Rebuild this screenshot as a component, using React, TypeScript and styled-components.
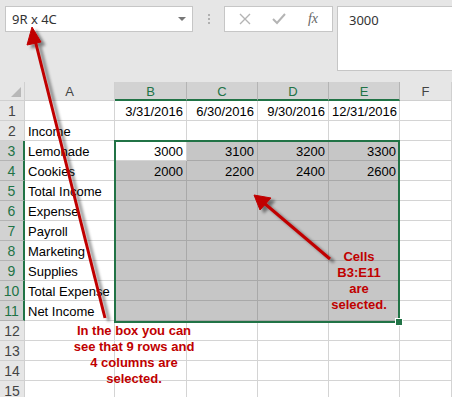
import React from "react";
import styled, { createGlobalStyle } from "styled-components";

const GREEN = "#217346";
const RED = "#c00000";
const COLS = "25px 90px 72px 71px 71px 71px 1fr";
const ROWS = "19px repeat(15, 20px)";

const GlobalStyle = createGlobalStyle`
  html, body {
    margin: 0;
    padding: 0;
    background: #ffffff;
    font-family: "Liberation Sans", Arial, sans-serif;
  }
`;

const colLetters = ["A", "B", "C", "D", "E", "F"];

const rows: string[][] = [
  ["", "3/31/2016", "6/30/2016", "9/30/2016", "12/31/2016", ""],
  ["Income", "", "", "", "", ""],
  ["Lemonade", "3000", "3100", "3200", "3300", ""],
  ["Cookies", "2000", "2200", "2400", "2600", ""],
  ["Total Income", "", "", "", "", ""],
  ["Expense", "", "", "", "", ""],
  ["Payroll", "", "", "", "", ""],
  ["Marketing", "", "", "", "", ""],
  ["Supplies", "", "", "", "", ""],
  ["Total Expense", "", "", "", "", ""],
  ["Net Income", "", "", "", "", ""],
  ["", "", "", "", "", ""],
  ["", "", "", "", "", ""],
  ["", "", "", "", "", ""],
  ["", "", "", "", "", ""],
];

// selection B3:E11 -> rows 3..11, cols 1..4
const inRange = (r: number, c: number) => r >= 3 && r <= 11 && c >= 1 && c <= 4;

const App = () => {
  return (
    <>
      <GlobalStyle />
      <Page>
        <Toolbar>
          <NameBox>
            <span>9R x 4C</span>
            <DropArrow />
          </NameBox>
          <Grip>
            <i />
            <i />
            <i />
          </Grip>
          <FxBox>
            <svg width="12" height="12" viewBox="0 0 12 12">
              <path d="M1 1 L11 11 M11 1 L1 11" stroke="#b4b4b4" strokeWidth="1.4" />
            </svg>
            <svg width="14" height="12" viewBox="0 0 14 12">
              <path d="M1 6 L5 10 L13 1" stroke="#b4b4b4" strokeWidth="2" fill="none" />
            </svg>
            <FxLabel>fx</FxLabel>
          </FxBox>
          <FormulaBox>3000</FormulaBox>
        </Toolbar>

        <SheetStack>
          <Sheet>
            <Corner>
              <CornerTriangle />
            </Corner>
            {colLetters.map((l, i) => (
              <ColHead key={l} $selected={i >= 1 && i <= 4}>
                {l}
              </ColHead>
            ))}
            {rows.map((row, ri) => {
              const r = ri + 1;
              return (
                <React.Fragment key={r}>
                  <RowHead $selected={r >= 3 && r <= 11}>{r}</RowHead>
                  {row.map((val, c) => {
                    const sel = inRange(r, c) ? (r === 3 && c === 1 ? "active" : "range") : "none";
                    return (
                      <Cell key={c} $sel={sel} $right={c > 0}>
                        {val}
                      </Cell>
                    );
                  })}
                </React.Fragment>
              );
            })}
          </Sheet>
          <SelectionLayer>
            <SelectionFrame>
              <FillHandle />
            </SelectionFrame>
          </SelectionLayer>
        </SheetStack>

        <Arrows width="452" height="397" viewBox="0 0 452 397">
          <defs>
            <filter id="shadow" x="-20%" y="-20%" width="140%" height="140%">
              <feDropShadow dx="4" dy="3" stdDeviation="1.6" floodColor="#000" floodOpacity="0.45" />
            </filter>
          </defs>
          <g filter="url(#shadow)" fill={RED} stroke={RED}>
            <line x1="105" y1="318" x2="35" y2="40" strokeWidth="3" />
            <polygon points="32,27 27,45 41,42" strokeWidth="1" />
            <line x1="330" y1="259" x2="264" y2="203" strokeWidth="3" />
            <polygon points="254,195 260,210 271,198" strokeWidth="1" />
          </g>
        </Arrows>

        <Note $x={134} $y={323}>
          In the box you can
          <br />
          see that 9 rows and
          <br />4 columns are
          <br />
          selected.
        </Note>
        <Note $x={359} $y={249}>
          Cells
          <br />
          B3:E11
          <br />
          are
          <br />
          selected.
        </Note>
      </Page>
    </>
  );
};

export default App;

const Page = styled.div`
  position: relative;
  width: 452px;
  height: 397px;
  overflow: hidden;
  background: #e6e6e6;
`;

const Toolbar = styled.div`
  height: 82px;
  box-sizing: border-box;
  padding: 6px 0 0 5px;
  display: flex;
  align-items: flex-start;
`;

const NameBox = styled.div`
  width: 188px;
  height: 26px;
  box-sizing: border-box;
  background: #fff;
  border: 1px solid #c6c6c6;
  display: flex;
  align-items: center;
  justify-content: space-between;
  padding: 0 6px 0 6px;
  font-family: "Noto Sans", "Open Sans", sans-serif;
  font-size: 13px;
  color: #333;
`;

const DropArrow = styled.div`
  width: 0;
  height: 0;
  border-left: 4px solid transparent;
  border-right: 4px solid transparent;
  border-top: 4px solid #777;
`;

const Grip = styled.div`
  width: 31px;
  height: 26px;
  display: flex;
  flex-direction: column;
  align-items: center;
  justify-content: center;
  gap: 2px;
  i {
    display: block;
    width: 2px;
    height: 2px;
    background: #b0b0b0;
  }
`;

const FxBox = styled.div`
  width: 109px;
  height: 26px;
  box-sizing: border-box;
  background: #fff;
  border: 1px solid #c6c6c6;
  display: flex;
  align-items: center;
  justify-content: space-between;
  padding: 0 14px 0 14px;
`;

const FxLabel = styled.span`
  font-family: "Liberation Serif", "DejaVu Serif", serif;
  font-style: italic;
  font-size: 14px;
  color: #666;
`;

const FormulaBox = styled.div`
  flex: 1;
  margin-left: 4px;
  height: 65px;
  box-sizing: border-box;
  background: #fff;
  border: 1px solid #c6c6c6;
  border-right: none;
  padding: 4px 0 0 11px;
  font-family: "Noto Sans", "Open Sans", sans-serif;
  font-size: 13px;
  color: #333;
`;

// the sheet and the selection overlay share one grid cell
const SheetStack = styled.div`
  display: grid;
  > * {
    grid-area: 1 / 1;
  }
`;

const Sheet = styled.div`
  display: grid;
  grid-template-columns: ${COLS};
  grid-template-rows: ${ROWS};
  background: #fff;
  font-family: "Liberation Sans", Arial, sans-serif;
  font-size: 13px;
`;

const SelectionLayer = styled.div`
  display: grid;
  grid-template-columns: ${COLS};
  grid-template-rows: ${ROWS};
  pointer-events: none;
`;

const HeadBase = styled.div`
  box-sizing: border-box;
  background: #e6e6e6;
  color: #444;
  display: flex;
  align-items: center;
  justify-content: center;
  font-size: 13px;
`;

const Corner = styled(HeadBase)`
  position: relative;
  border-right: 1px solid #d0d0d0;
  border-bottom: 1px solid #d0d0d0;
`;

const CornerTriangle = styled.div`
  position: absolute;
  right: 3px;
  bottom: 3px;
  width: 0;
  height: 0;
  border-left: 10px solid transparent;
  border-bottom: 10px solid #b8b8b8;
`;

const ColHead = styled(HeadBase)<{ $selected: boolean }>`
  background: ${(p) => (p.$selected ? "#d2d2d2" : "#e6e6e6")};
  color: ${(p) => (p.$selected ? GREEN : "#444")};
  border-right: 1px solid ${(p) => (p.$selected ? "#b4b4b4" : "#d0d0d0")};
  border-bottom: ${(p) => (p.$selected ? `2px solid ${GREEN}` : "1px solid #d0d0d0")};
  padding-top: 1px;
`;

const RowHead = styled(HeadBase)<{ $selected: boolean }>`
  background: ${(p) => (p.$selected ? "#d2d2d2" : "#e6e6e6")};
  color: ${(p) => (p.$selected ? GREEN : "#444")};
  border-bottom: 1px solid ${(p) => (p.$selected ? "#b4b4b4" : "#d0d0d0")};
  border-right: ${(p) => (p.$selected ? `2px solid ${GREEN}` : "1px solid #d0d0d0")};
  font-size: 14px;
`;

const Cell = styled.div<{ $sel: "none" | "range" | "active"; $right: boolean }>`
  box-sizing: border-box;
  padding: 2px 3px 0 3px;
  white-space: nowrap;
  line-height: 18px;
  color: #000;
  text-align: ${(p) => (p.$right ? "right" : "left")};
  background: ${(p) => (p.$sel === "range" ? "#c6c6c6" : "#fff")};
  border-right: 1px solid ${(p) => (p.$sel === "range" ? "#a9a9a9" : "#d4d4d4")};
  border-bottom: 1px solid ${(p) => (p.$sel === "range" ? "#a9a9a9" : "#d4d4d4")};
`;

const SelectionFrame = styled.div`
  grid-column: 3 / 7;
  grid-row: 4 / 13;
  margin: -1px 0 -2px -1px;
  border: 2px solid ${GREEN};
  position: relative;
`;

const FillHandle = styled.div`
  position: absolute;
  right: -5px;
  bottom: -5px;
  width: 6px;
  height: 6px;
  background: ${GREEN};
  border: 1px solid #fff;
`;

const Arrows = styled.svg`
  position: absolute;
  left: 0;
  top: 0;
  pointer-events: none;
`;

const Note = styled.div<{ $x: number; $y: number }>`
  position: absolute;
  left: ${(p) => p.$x - 80}px;
  top: ${(p) => p.$y}px;
  width: 160px;
  text-align: center;
  font-family: "Liberation Sans", Arial, sans-serif;
  font-weight: bold;
  font-size: 13px;
  line-height: 16px;
  color: ${RED};
`;
